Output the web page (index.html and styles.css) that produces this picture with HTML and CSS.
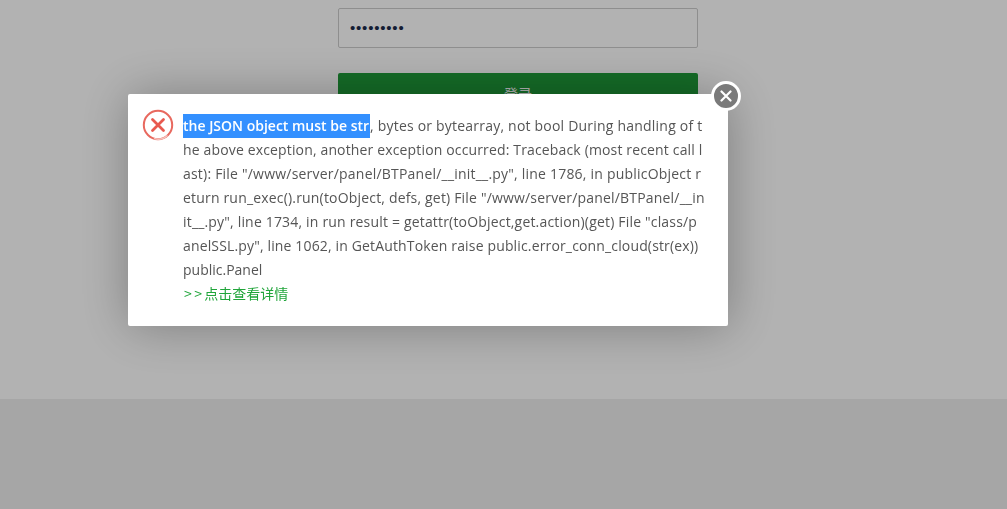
FILE: index.html
```html
<!DOCTYPE html>
<html lang="zh">
<head>
<meta charset="utf-8">
<title>登录</title>
<link rel="stylesheet" href="styles.css">
</head>
<body>
<main class="page">
  <form class="login">
    <div class="password"><span class="dots">•••••••••</span></div>
    <button class="submit" type="button">登录</button>
  </form>
</main>
<div class="footer"></div>
<div class="shade"></div>
<section class="dialog">
  <svg class="error-icon" viewBox="0 0 32 32" width="32" height="32" aria-hidden="true">
    <circle cx="16" cy="16" r="14.2" fill="none" stroke="#e8695f" stroke-width="2"/>
    <path d="M25.5 26.5A14.2 14.2 0 0 1 12 29.6" fill="none" stroke="#f6c4bf" stroke-width="1.6"/>
    <path d="M10.5 10.5 21.5 21.5M21.5 10.5 10.5 21.5" fill="none" stroke="#e8594f" stroke-width="2.8" stroke-linecap="round"/>
  </svg>
  <div class="message">
    <div class="line wide"><span class="selected">the JSON object must be str</span>, bytes or bytearray, not bool During handling of t</div>
    <div class="line">he above exception, another exception occurred: Traceback (most recent call l</div>
    <div class="line wide">ast): File "/www/server/panel/BTPanel/__init__.py", line 1786, in publicObject r</div>
    <div class="line mid">eturn run_exec().run(toObject, defs, get) File "/www/server/panel/BTPanel/__in</div>
    <div class="line mid">it__.py", line 1734, in run result = getattr(toObject,get.action)(get) File "class/p</div>
    <div class="line">anelSSL.py", line 1062, in GetAuthToken raise public.error_conn_cloud(str(ex))</div>
    <div class="line last">public.Panel</div>
    <a class="details" href="#"><span class="arrows">&gt;&gt;</span>点击查看详情</a>
  </div>
  <button class="close" type="button" aria-label="关闭">
    <svg viewBox="0 0 12 12" width="12" height="12" aria-hidden="true"><path d="M1.5 1.5 10.5 10.5M10.5 1.5 1.5 10.5" fill="none" stroke="#fff" stroke-width="2.2" stroke-linecap="round"/></svg>
  </button>
</section>
</body>
</html>
```

FILE: styles.css
```css
* { box-sizing: border-box; }
html, body { margin: 0; height: 100%; overflow: hidden; }
body {
  display: flex;
  flex-direction: column;
  background: #eee;
  font-family: "Open Sans", "Noto Sans CJK SC", sans-serif;
}
.page { height: 399px; background: #fff; }
.login {
  width: 360px;
  margin-left: 338px;
  padding-top: 8px;
  display: flex;
  flex-direction: column;
  gap: 25px;
}
.password {
  height: 40px;
  border: 1px solid #ccc;
  border-radius: 2px;
  padding-left: 11px;
  line-height: 38px;
  color: #1a2a4a;
  font-size: 14px;
}
.dots { font-family: "Liberation Sans", sans-serif; font-size: 15px; letter-spacing: .8px; }
.submit {
  height: 40px;
  border: 0;
  border-radius: 2px;
  background: #1e9a38;
  color: #fff;
  font: 14px "Noto Sans CJK SC", sans-serif;
}
.footer { flex: 1; }
.shade { position: fixed; inset: 0; background: rgba(0, 0, 0, .3); }
.dialog {
  position: fixed;
  left: 128px;
  top: 94px;
  width: 600px;
  height: 232px;
  padding: 20px 24px 0 55px;
  background: #fff;
  border-radius: 2px;
  box-shadow: 1px 1px 50px rgba(0, 0, 0, .3);
}
.error-icon { position: absolute; left: 14px; top: 15px; }
.message { font-size: 14px; line-height: 24px; color: #555; }
.line { white-space: nowrap; letter-spacing: .15px; }
.line.wide { letter-spacing: .21px; }
.line.mid { letter-spacing: .18px; }
.line.last { letter-spacing: 0; }
.selected {
  display: inline-block;
  width: 187px;
  background: #3390ff;
  color: #fff;
  font-weight: 600;
  letter-spacing: 0;
}
.details {
  display: block;
  line-height: 22px;
  color: #20a53a;
  text-decoration: none;
  font-family: "Noto Sans CJK SC", sans-serif;
}
.arrows { letter-spacing: 2.6px; margin-right: -.5px; margin-left: 1px; }
.close {
  position: absolute;
  right: -13px;
  top: -13px;
  width: 30px;
  height: 30px;
  padding: 0;
  display: flex;
  align-items: center;
  justify-content: center;
  background: #7a7a7a;
  border: 3px solid #fff;
  border-radius: 50%;
}
```
